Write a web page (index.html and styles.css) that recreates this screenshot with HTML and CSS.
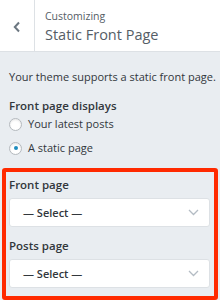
FILE: index.html
```html
<!DOCTYPE html>
<html>
<head>
<meta charset="utf-8">
<link rel="stylesheet" href="styles.css">
</head>
<body>
<div class="panel">
  <header class="head">
    <div class="back">
      <svg width="8" height="12" viewBox="0 0 8 12"><path d="M6 1.5 L1.8 6 L6 10.5" fill="none" stroke="#6c7781" stroke-width="2"/></svg>
    </div>
    <div class="titles">
      <div class="sub">Customizing</div>
      <div class="title">Static Front Page</div>
    </div>
  </header>
  <div class="body">
    <p class="desc">Your theme supports a static front page.</p>
    <div class="label">Front page displays</div>
    <label class="radio"><span class="dot"></span>Your latest posts</label>
    <label class="radio"><span class="dot on"></span>A static page</label>
    <div class="highlight">
      <div class="field-label">Front page</div>
      <div class="select"><span>— Select —</span>
        <svg width="11" height="7" viewBox="0 0 11 7"><path d="M1 1 L5.5 5.5 L10 1" fill="none" stroke="#b4bcc4" stroke-width="1.3"/></svg>
      </div>
      <div class="field-label second">Posts page</div>
      <div class="select"><span>— Select —</span>
        <svg width="11" height="7" viewBox="0 0 11 7"><path d="M1 1 L5.5 5.5 L10 1" fill="none" stroke="#b4bcc4" stroke-width="1.3"/></svg>
      </div>
    </div>
  </div>
</div>
</body>
</html>
```
FILE: styles.css
```css
html, body {
  margin: 0;
  padding: 0;
}
body {
  width: 220px;
  height: 300px;
  overflow: hidden;
  background: #e9edf1;
  font-family: "Open Sans", "Noto Sans", sans-serif;
  color: #32373c;
}
.head {
  display: flex;
  height: 52px;
  background: #fff;
  border-bottom: 1px solid #dde1e5;
  box-sizing: border-box;
}
.back {
  width: 35px;
  border-right: 1px solid #dde1e5;
  display: flex;
  align-items: center;
  justify-content: center;
  padding-top: 2px;
  box-sizing: border-box;
}
.titles {
  padding: 9px 0 0 10px;
  color: #555d66;
}
.sub {
  font-size: 10.5px;
  line-height: 14px;
}
.title {
  font-size: 14.5px;
  line-height: 20px;
  margin-top: 2px;
}
.body {
  padding: 0 0 0 9px;
}
.desc {
  margin: 17px 0 0;
  font-size: 11px;
  line-height: 16px;
}
.label {
  margin-top: 13px;
  font-size: 11.5px;
  font-weight: 600;
  line-height: 16px;
}
.radio {
  display: flex;
  align-items: center;
  font-size: 11px;
  line-height: 16px;
  margin-top: 0;
  height: 20px;
}
.radio + .radio {
  margin-top: 4px;
}
.dot {
  width: 11px;
  height: 11px;
  border: 1px solid #b4b9be;
  border-radius: 50%;
  background: #fff;
  box-shadow: inset 0 1px 2px rgba(0,0,0,0.1);
  margin-right: 6px;
  position: relative;
  flex: none;
}
.dot.on::after {
  content: "";
  position: absolute;
  left: 3.5px;
  top: 3.5px;
  width: 4px;
  height: 4px;
  border-radius: 50%;
  background: #1e8cbe;
}
.highlight {
  margin: 10px 0 0 -7px;
  width: 216px;
  box-sizing: border-box;
  border: 4px solid #ff2a00;
  border-radius: 3px;
  padding: 5px 4px 8px 3px;
}
.field-label {
  font-size: 11.5px;
  font-weight: 600;
  line-height: 16px;
}
.field-label.second {
  margin-top: 11px;
}
.select {
  margin-top: 5px;
  height: 29px;
  box-sizing: border-box;
  background: #fff;
  border: 1px solid #dde1e5;
  border-radius: 3px;
  display: flex;
  align-items: center;
  justify-content: space-between;
  padding: 0 10px 0 13px;
  font-size: 11px;
  font-weight: 600;
  color: #32373c;
}
```
